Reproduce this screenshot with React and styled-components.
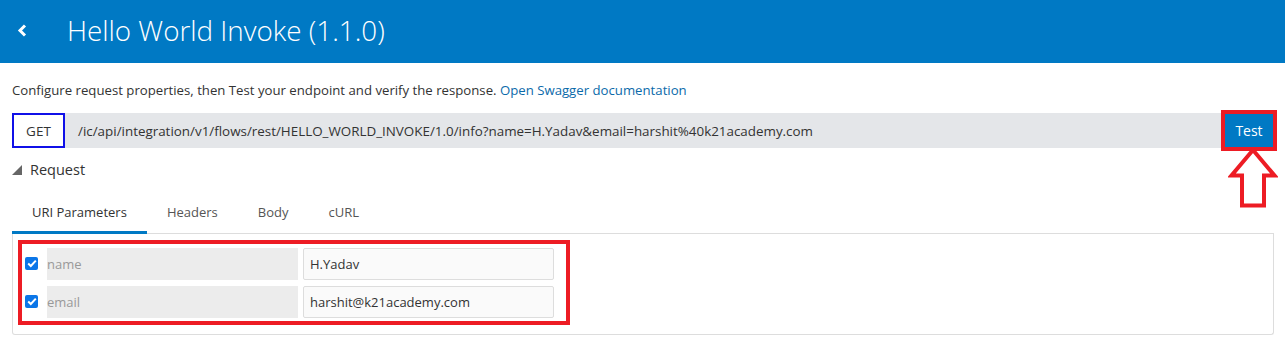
import React from 'react'
import styled, { createGlobalStyle } from 'styled-components'

const GlobalStyle = createGlobalStyle`
  html, body {
    margin: 0;
    padding: 0;
    background: #fff;
  }
  body {
    font-family: 'Open Sans', 'Noto Sans', sans-serif;
    color: #333;
  }
  * {
    box-sizing: border-box;
  }
`

const params = [
  { name: 'name', value: 'H.Yadav' },
  { name: 'email', value: 'harshit@k21academy.com' },
]

const tabs = ['URI Parameters', 'Headers', 'Body', 'cURL']

const App = () => {
  return (
    <Page>
      <GlobalStyle />
      <Header>
        <BackButton aria-label='back'>
          <svg width='11' height='13' viewBox='0 0 11 13'>
            <path
              d='M8 1.5 L3 6.5 L8 11.5'
              fill='none'
              stroke='#fff'
              strokeWidth='3'
              strokeLinejoin='miter'
            />
          </svg>
        </BackButton>
        <Title>Hello World Invoke (1.1.0)</Title>
      </Header>

      <Content>
        <Intro>
          Configure request properties, then Test your endpoint and verify the
          response. <Link href='#'>Open Swagger documentation</Link>
        </Intro>

        <RequestBar>
          <Method>GET</Method>
          <UrlField>
            /ic/api/integration/v1/flows/rest/HELLO_WORLD_INVOKE/1.0/info?name=H.Yadav&amp;email=harshit%40k21academy.com
          </UrlField>
          <TestWrap>
            <TestButton>Test</TestButton>
            <Arrow width='50' height='60' viewBox='0 0 50 60'>
              <path
                d='M25 2 L46.5 27.5 L36 27.5 L36 57.5 L14 57.5 L14 27.5 L3.5 27.5 Z'
                fill='#fff'
                stroke='#ed1c24'
                strokeWidth='4'
                strokeLinejoin='miter'
              />
            </Arrow>
          </TestWrap>
        </RequestBar>

        <SectionToggle>
          <svg width='10' height='10' viewBox='0 0 10 10'>
            <path d='M10 0 L10 10 L0 10 Z' fill='#666' />
          </svg>
          <span>Request</span>
        </SectionToggle>

        <TabList>
          {tabs.map((tab, i) => (
            <Tab key={tab} $active={i === 0}>
              {tab}
            </Tab>
          ))}
        </TabList>

        <Panel>
          <ParamList>
            {params.map((p) => (
              <ParamRow key={p.name}>
                <Check>
                  <svg width='10' height='9' viewBox='0 0 10 9'>
                    <path
                      d='M1.2 4.6 L3.8 7 L8.8 1.6'
                      fill='none'
                      stroke='#fff'
                      strokeWidth='2'
                    />
                  </svg>
                </Check>
                <NameField>{p.name}</NameField>
                <ValueField>{p.value}</ValueField>
              </ParamRow>
            ))}
          </ParamList>
        </Panel>
      </Content>
    </Page>
  )
}

const Page = styled.div`
  width: 1285px;
  min-height: 350px;
`

const Header = styled.header`
  height: 63px;
  background: #0079c4;
  display: flex;
  align-items: center;
  padding-left: 16px;
`

const BackButton = styled.button`
  border: 0;
  background: none;
  padding: 0;
  width: 12px;
  height: 14px;
  display: grid;
  place-items: center;
  margin-top: -2px;
  cursor: pointer;
`

const Title = styled.h1`
  margin: -2px 0 0 39px;
  font-size: 27.8px;
  font-weight: 300;
  color: #fff;
  line-height: 1;
`

const Content = styled.main`
  padding: 0 11px 0 12px;
`

const Intro = styled.p`
  margin: 18px 0 0;
  font-size: 13.2px;
  line-height: 18px;
  color: #333;
`

const Link = styled.a`
  color: #0b6aaa;
  text-decoration: none;
`

const RequestBar = styled.div`
  margin-top: 14px;
  height: 35px;
  display: flex;
  background: #e4e6e9;
`

const Method = styled.div`
  width: 53px;
  border: 2px solid #1010e8;
  background: #fff;
  display: grid;
  place-items: center;
  font-size: 13.5px;
  color: #333;
`

const UrlField = styled.div`
  flex: 1;
  display: flex;
  align-items: center;
  padding-left: 13px;
  font-size: 13.4px;
  color: #333;
  white-space: nowrap;
`

const TestWrap = styled.div`
  position: relative;
  display: flex;
`

const TestButton = styled.button`
  width: 50px;
  height: 35px;
  border: 0;
  background: #0079c4;
  color: #fff;
  font-family: inherit;
  font-size: 14px;
  outline: 4px solid #ed1c24;
  outline-offset: -1px;
  cursor: pointer;
`

const Arrow = styled.svg`
  position: absolute;
  top: 35px;
  left: 4px;
`

const SectionToggle = styled.div`
  margin-top: 11px;
  display: flex;
  align-items: center;
  gap: 8px;
  font-size: 14.5px;
  color: #333;
  height: 20px;
  svg {
    margin-top: 1px;
  }
`

const TabList = styled.div`
  margin-top: 21px;
  display: flex;
  border-bottom: 1px solid #ddd;
`

const Tab = styled.div`
  padding: 0 20px;
  height: 34px;
  display: flex;
  align-items: flex-start;
  padding-top: 3px;
  font-size: 13px;
  color: ${(p) => (p.$active ? '#333' : '#555')};
  border-bottom: 3px solid ${(p) => (p.$active ? '#0079c4' : 'transparent')};
  margin-bottom: -1px;
`

const Panel = styled.section`
  border: 1px solid #ddd;
  border-top: 0;
  border-radius: 0 0 3px 3px;
  height: 101px;
  padding: 6px 0 0 5px;
`

const ParamList = styled.div`
  width: 552px;
  border: 4px solid #ed1c24;
  padding: 4px 0 3px 3px;
  display: flex;
  flex-direction: column;
  gap: 6px;
`

const ParamRow = styled.div`
  display: flex;
  align-items: center;
  height: 32px;
`

const Check = styled.span`
  width: 13px;
  height: 13px;
  margin-top: -1px;
  border-radius: 2px;
  background: #0b76e8;
  display: grid;
  place-items: center;
  margin-right: 9px;
`

const NameField = styled.div`
  width: 251px;
  height: 100%;
  background: #ececec;
  color: #999;
  font-size: 13px;
  display: flex;
  align-items: center;
  padding-left: 0;
`

const ValueField = styled.div`
  width: 251px;
  height: 100%;
  margin-left: 5px;
  background: #fafafa;
  border: 1px solid #ddd;
  border-radius: 2px;
  color: #333;
  font-size: 13px;
  display: flex;
  align-items: center;
  padding-left: 6px;
`

export default App
